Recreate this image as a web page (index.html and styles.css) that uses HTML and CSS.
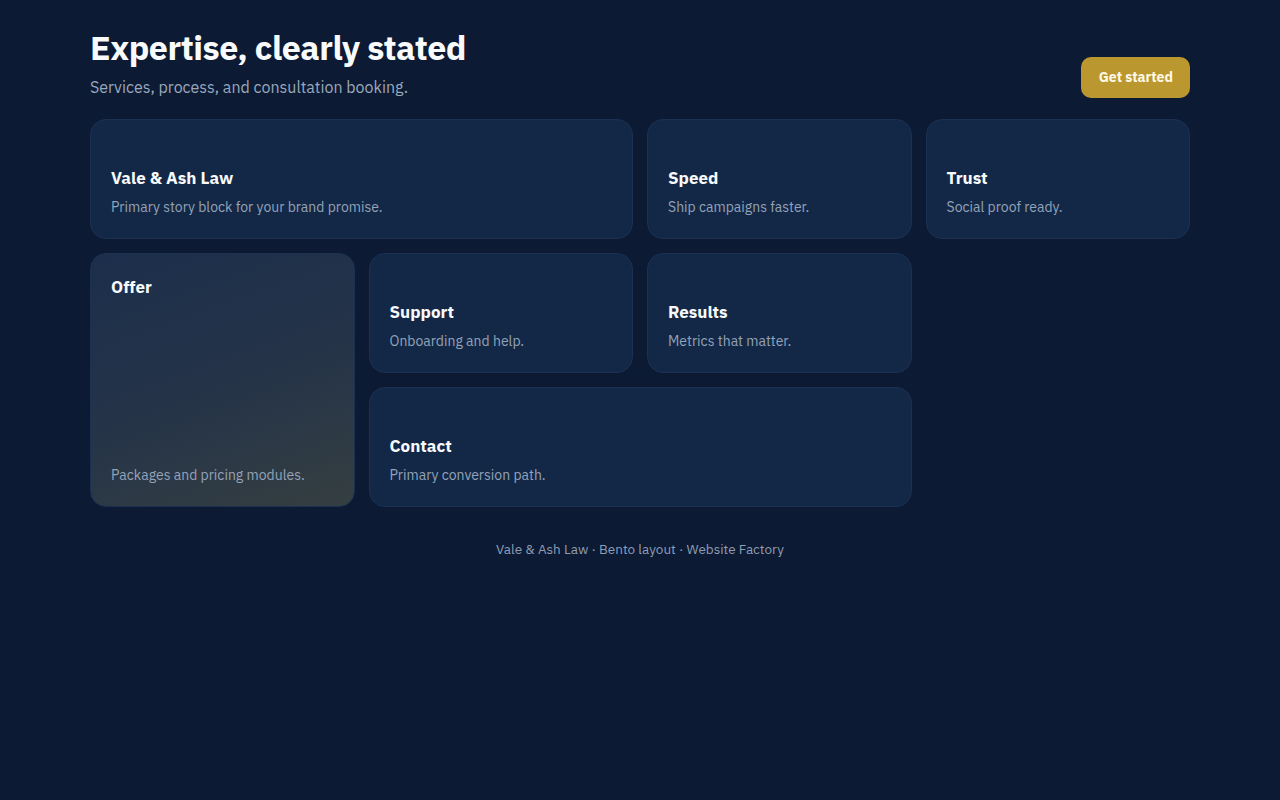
FILE: index.html
```html
<!DOCTYPE html>
<html lang="en">
<head>
    <meta charset="UTF-8">
    <meta name="viewport" content="width=device-width, initial-scale=1.0">
    <title>Vale &amp; Ash Law</title>
    <link rel="stylesheet" href="styles.css">
</head>
<body>
    <div class="page">
        <header class="page-header">
            <div class="intro">
                <h1 class="title">Expertise, clearly stated</h1>
                <p class="subtitle">Services, process, and consultation booking.</p>
            </div>
            <a href="#" class="cta">Get started</a>
        </header>

        <section class="bento">
            <div class="card card-wide">
                <h3 class="card-title">Vale &amp; Ash Law</h3>
                <p class="card-text">Primary story block for your brand promise.</p>
            </div>
            <div class="card">
                <h3 class="card-title">Speed</h3>
                <p class="card-text">Ship campaigns faster.</p>
            </div>
            <div class="card">
                <h3 class="card-title">Trust</h3>
                <p class="card-text">Social proof ready.</p>
            </div>
            <div class="card card-tall">
                <h3 class="card-title">Offer</h3>
                <p class="card-text">Packages and pricing modules.</p>
            </div>
            <div class="card">
                <h3 class="card-title">Support</h3>
                <p class="card-text">Onboarding and help.</p>
            </div>
            <div class="card">
                <h3 class="card-title">Results</h3>
                <p class="card-text">Metrics that matter.</p>
            </div>
            <div class="card card-contact">
                <h3 class="card-title">Contact</h3>
                <p class="card-text">Primary conversion path.</p>
            </div>
        </section>

        <footer class="page-footer">Vale &amp; Ash Law · Bento layout · Website Factory</footer>
    </div>
</body>
</html>
```

FILE: styles.css
```css
*{
    margin: 0px;
    padding: 0px;
    box-sizing: border-box;
}

body{
    font-family: "IBM Plex Sans", "Noto Sans", sans-serif;
    background-color: #0c1a33;
    color: #f1f5f9;
}

.page{
    width: 1100px;
    margin: 0 auto;
    padding-top: 27px;
}

.page-header{
    display: flex;
    justify-content: space-between;
    align-items: flex-end;
}

.title{
    font-size: 34px;
    line-height: 40px;
    font-weight: 700;
    letter-spacing: -0.5px;
    color: #f8fafc;
}

.subtitle{
    margin-top: 9px;
    font-size: 16px;
    line-height: 22px;
    color: #9aa8bd;
}

.cta{
    display: inline-block;
    padding: 11px 17px 11px 17.5px;
    background-color: #bb972f;
    color: #fdf7e6;
    border-radius: 10px;
    font-size: 14px;
    line-height: 19px;
    font-weight: 700;
    text-decoration: none;
}

.bento{
    margin-top: 21px;
    display: grid;
    grid-template-columns: repeat(4, 1fr);
    grid-auto-rows: 120px;
    gap: 14px;
}

.card{
    display: flex;
    flex-direction: column;
    justify-content: flex-end;
    padding: 20px;
    background-color: #132847;
    border: 1px solid #1c3152;
    border-radius: 16px;
}

.card-wide{
    grid-column: 1 / span 2;
}

.card-tall{
    grid-column: 1;
    grid-row: 2 / span 2;
    justify-content: space-between;
    background: linear-gradient(160deg, #1b2e4b 0%, #263448 55%, #353f41 100%);
}

.card-contact{
    grid-column: 2 / span 2;
}

.card-title{
    font-size: 17px;
    line-height: 26px;
    font-weight: 700;
    color: #f8fafc;
}

.card-text{
    margin-top: 6px;
    font-size: 14px;
    line-height: 21px;
    color: #94a3b8;
}

.page-footer{
    margin-top: 33px;
    text-align: center;
    font-size: 13.5px;
    line-height: 18px;
    color: #8e9db5;
}
```
